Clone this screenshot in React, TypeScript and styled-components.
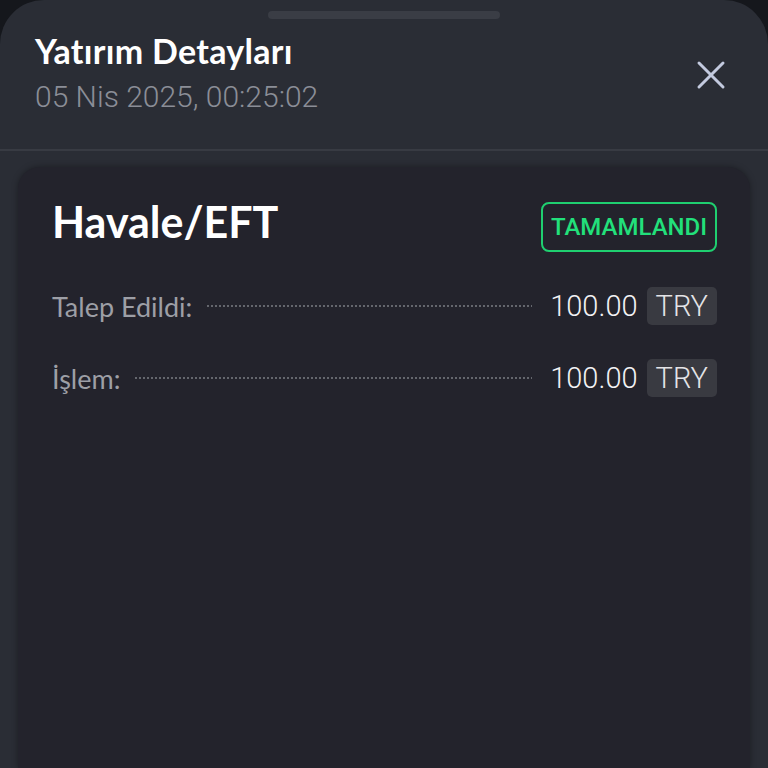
import styled, { createGlobalStyle } from 'styled-components'

const GlobalStyle = createGlobalStyle`
    html, body {
        margin: 0;
        padding: 0;
        background: #15171c;
    }
    * {
        box-sizing: border-box;
    }
`

const Sheet = styled.div`
    width: 768px;
    min-height: 768px;
    background: #2a2d35;
    border-radius: 44px 44px 0 0;
    display: flex;
    flex-direction: column;
    overflow: hidden;
`

const Handle = styled.div`
    width: 232px;
    height: 8px;
    margin: 11px auto 0;
    border-radius: 4px;
    background: #3a3d45;
`

const Header = styled.div`
    display: flex;
    justify-content: space-between;
    align-items: center;
    padding: 12px 42px 35px 35px;
    border-bottom: 2px solid #383b43;
`

const Title = styled.h1`
    margin: 0;
    font-family: 'Lato', 'Liberation Sans', sans-serif;
    font-weight: 700;
    font-size: 34px;
    line-height: 40px;
    letter-spacing: 0.3px;
    color: #ffffff;
`

const DateText = styled.div`
    margin-top: 9px;
    font-family: 'Roboto', 'Liberation Sans', sans-serif;
    font-weight: 300;
    font-size: 30px;
    line-height: 34px;
    color: #8b8e97;
`

const CloseButton = styled.button`
    background: none;
    border: 0;
    padding: 0;
    width: 30px;
    height: 30px;
    display: flex;
    cursor: pointer;
    margin-top: 4px;
`

const Card = styled.div`
    flex: 1;
    margin: 16px 18px 0;
    padding: 30px 33px 0 34px;
    background: #23232c;
    border-radius: 22px 22px 0 0;
    box-shadow: 0 0 6px rgba(0, 0, 0, 0.35);
`

const CardHead = styled.div`
    display: flex;
    justify-content: space-between;
    align-items: flex-start;
    margin-bottom: 35px;
`

const Method = styled.h2`
    margin: 0;
    font-family: 'Lato', 'Liberation Sans', sans-serif;
    font-weight: 700;
    font-size: 43px;
    line-height: 50px;
    color: #ffffff;
`

const Badge = styled.span`
    margin-top: 5px;
    height: 50px;
    width: 176px;
    display: flex;
    align-items: center;
    justify-content: center;
    border: 2px solid #1fcf70;
    border-radius: 8px;
    font-family: 'Roboto', 'Liberation Sans', sans-serif;
    font-weight: 500;
    font-size: 24px;
    color: #22e07b;
`

const Rows = styled.div`
    display: flex;
    flex-direction: column;
    gap: 34px;
`

const Row = styled.div`
    display: flex;
    align-items: center;
    height: 38px;
`

const Label = styled.span`
    font-family: 'Lato', 'Liberation Sans', sans-serif;
    font-size: 27px;
    color: #9d9fa6;
`

const Dots = styled.span`
    flex: 1;
    height: 2px;
    margin: 0 18px 0 15px;
    background: repeating-linear-gradient(to right, #64666d 0 2px, transparent 2px 4px);
`

const Amount = styled.span`
    font-family: 'Roboto', 'Liberation Sans', sans-serif;
    font-weight: 300;
    font-size: 29px;
    color: #f2f2f4;
`

const Currency = styled.span`
    margin-left: 9px;
    height: 38px;
    padding: 0 9px;
    display: flex;
    align-items: center;
    border-radius: 5px;
    background: #393a41;
    font-family: 'Roboto', 'Liberation Sans', sans-serif;
    font-weight: 300;
    font-size: 29px;
    color: #e4e4e7;
`

const items = [
    { label: 'Talep Edildi:', amount: '100.00', currency: 'TRY' },
    { label: 'İşlem:', amount: '100.00', currency: 'TRY' },
]

export default function App() {
    return (
        <>
            <GlobalStyle />
            <Sheet>
                <Handle />
                <Header>
                    <div>
                        <Title>Yatırım Detayları</Title>
                        <DateText>05 Nis 2025, 00:25:02</DateText>
                    </div>
                    <CloseButton aria-label="Kapat">
                        <svg width="30" height="30" viewBox="0 0 30 30">
                            <path
                                d="M3 3 L27 27 M27 3 L3 27"
                                stroke="#c3cadf"
                                strokeWidth="3"
                                strokeLinecap="round"
                            />
                        </svg>
                    </CloseButton>
                </Header>
                <Card>
                    <CardHead>
                        <Method>Havale/EFT</Method>
                        <Badge>TAMAMLANDI</Badge>
                    </CardHead>
                    <Rows>
                        {items.map((item) => (
                            <Row key={item.label}>
                                <Label>{item.label}</Label>
                                <Dots />
                                <Amount>{item.amount}</Amount>
                                <Currency>{item.currency}</Currency>
                            </Row>
                        ))}
                    </Rows>
                </Card>
            </Sheet>
        </>
    )
}
